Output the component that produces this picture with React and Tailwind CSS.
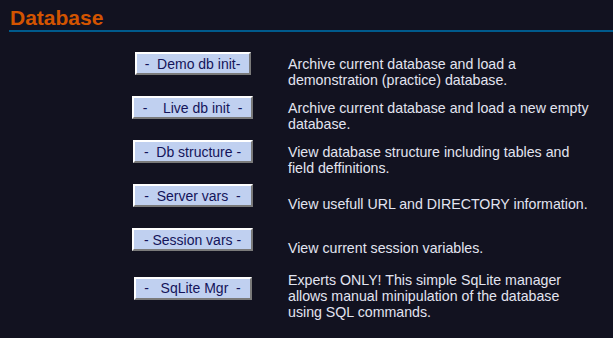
// Database admin page — buttons + descriptions

const ROWS = [
  {
    label: "-  Demo db init-",
    w: "w-[116px]",
    text: "Archive current database and load a demonstration (practice) database.",
  },
  {
    label: "-    Live db init  -",
    w: "w-[121px]",
    text: "Archive current database and load a new empty database.",
  },
  {
    label: "-  Db structure -",
    w: "w-[120px]",
    text: "View database structure including tables and field deffinitions.",
  },
  {
    label: "-  Server vars  -",
    w: "w-[120px]",
    text: "View usefull URL and DIRECTORY information.",
  },
  {
    label: "- Session vars -",
    w: "w-[121px]",
    text: "View current session variables.",
  },
  {
    label: "-   SqLite Mgr  -",
    w: "w-[118px]",
    text: "Experts ONLY! This simple SqLite manager allows manual minipulation of the database using SQL commands.",
  },
];

export default function App() {
  return (
    <div className="min-h-screen bg-[#121220] font-['Liberation_Sans',Arial,sans-serif]">
      {/* header */}
      <h1 className="pl-[10px] pt-[6px] text-[21px] leading-[24px] font-bold text-[#d35400]">
        Database
      </h1>
      <div className="ml-[9px] h-[2px] bg-[#005a8c]" />

      {/* rows */}
      <div className="mt-[20px] flex flex-col gap-[5px]">
        {ROWS.map((r) => (
          <div key={r.label} className="flex items-center">
            <div className="ml-[130px] w-[125px] flex flex-col items-center">
              <button
                className={`${r.w} h-[23px] bg-[#c0d0f0] border-2 border-t-white border-l-white border-r-[#7a7a7a] border-b-[#7a7a7a] text-[14px] leading-[16px] text-[#14145a] whitespace-pre text-center`}
              >
                {r.label}
              </button>
              <div className="h-[16px]" />
            </div>
            <p className="ml-[33px] w-[301px] text-[14.2px] leading-[16px] text-[#e2e4f0]">
              {r.text}
            </p>
          </div>
        ))}
      </div>
    </div>
  );
}
